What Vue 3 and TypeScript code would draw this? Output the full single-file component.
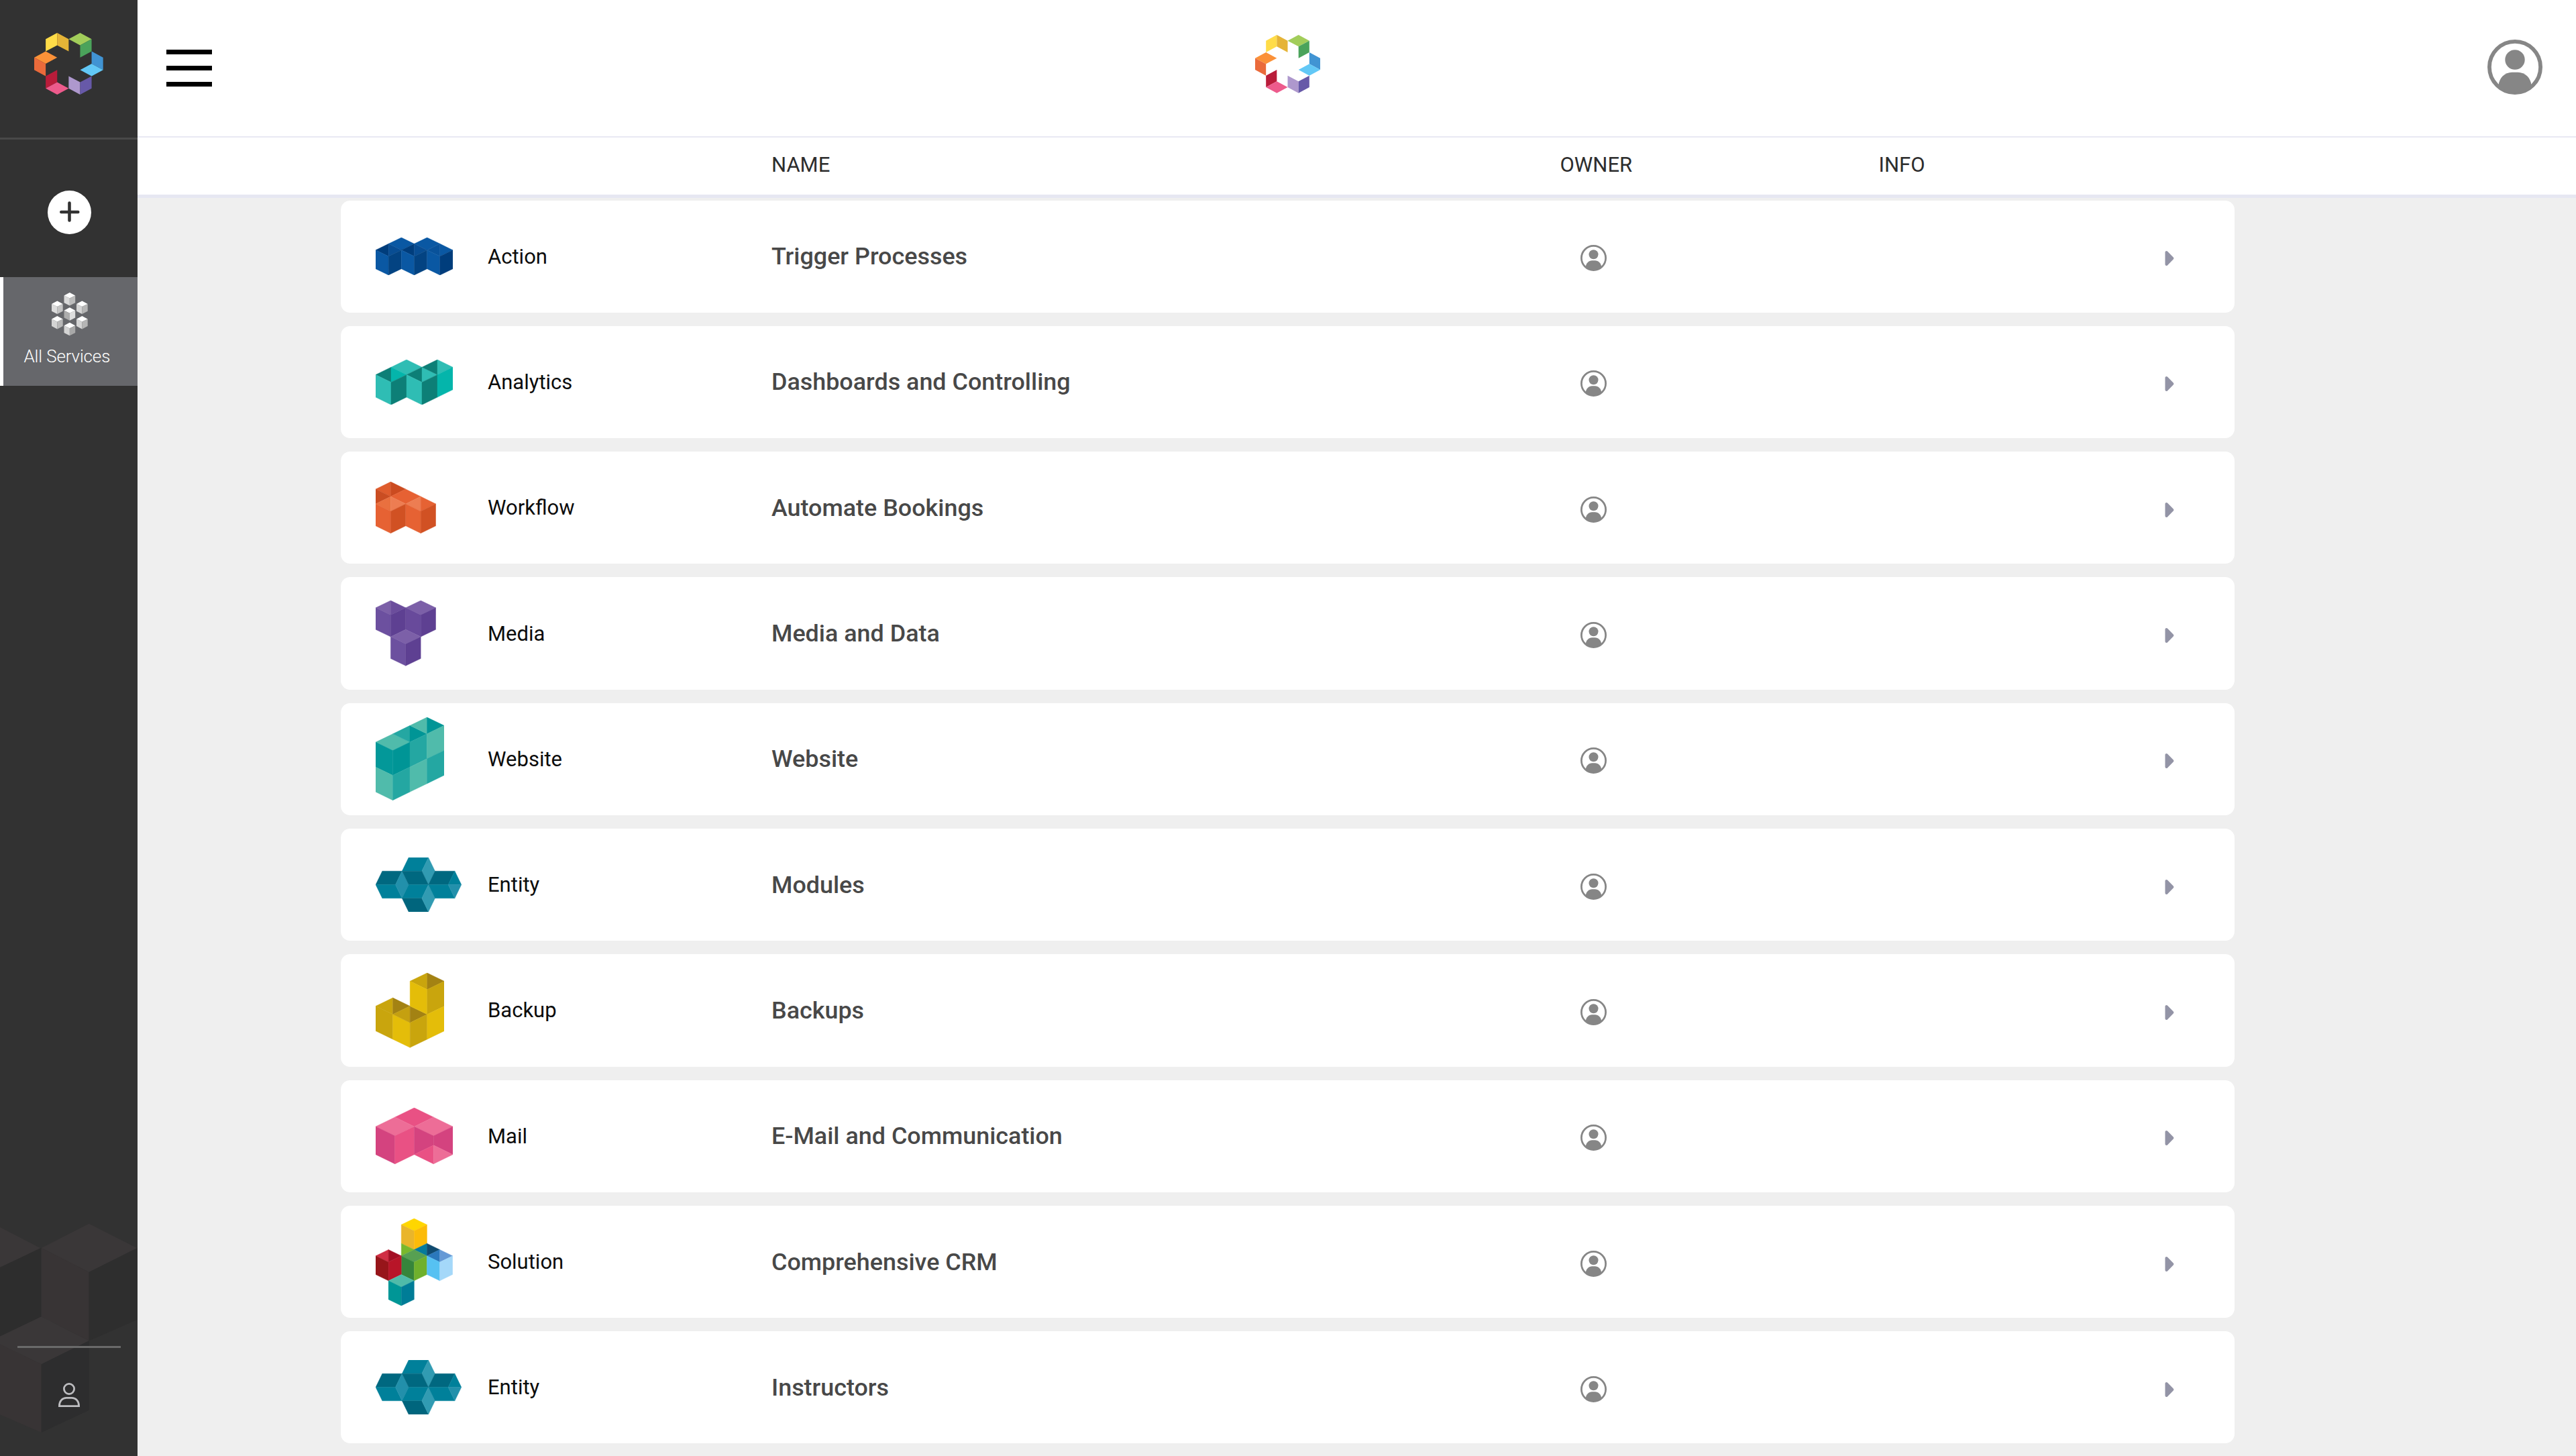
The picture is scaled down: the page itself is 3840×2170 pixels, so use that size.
<script setup lang="ts">
type Face = [points: string, fill: string]

interface Glyph {
  cols: number
  rows: number
  width: number
  height: number
  faces: Face[]
}

interface Service {
  kind: string
  icon: string
  title: string
}

// Faces are given on an isometric grid: cols x rows cells stretched to width x height.
const logoFaces: Face[] = [
  ['1,1 2,0 2,2 1,3', '#ffdc48'],
  ['2,0 3,1 3,3 2,2', '#e5b437'],
  ['3,1 4,0 5,1 4,2', '#a2cd5a'],
  ['4,2 5,1 5,3 4,4', '#4ba35b'],
  ['0,4 1,3 2,4 1,5', '#fb9138'],
  ['0,4 1,5 1,7 0,6', '#ea6a3b'],
  ['5,3 6,4 6,6 5,5', '#4194d3'],
  ['4,6 5,5 6,6 5,7', '#62c8f6'],
  ['3,7 4,8 4,10 3,9', '#ae98cd'],
  ['4,8 5,7 5,9 4,10', '#6759a8'],
  ['1,7 2,6 2,8 1,9', '#b91c3a'],
  ['1,9 2,8 3,9 2,10', '#ed5b8c'],
]

const glyphs: Record<string, Glyph> = {
  action: {
    cols: 6, rows: 6, width: 115, height: 56,
    faces: [
      ['1,1 2,0 3,1 2,2', '#0a58a3'],
      ['3,1 4,0 5,1 4,2', '#0a58a3'],
      ['0,2 1,1 1,3', '#003d7c'],
      ['1,1 2,2 1,3', '#084d93'],
      ['0,2 1,3 1,6 0,5', '#0a58a3'],
      ['1,3 2,2 2,5 1,6', '#034382'],
      ['2,2 3,1 3,3', '#003d7c'],
      ['3,1 4,2 3,3', '#084d93'],
      ['2,2 3,3 3,6 2,5', '#0a58a3'],
      ['3,3 4,2 4,5 3,6', '#034382'],
      ['4,2 5,1 5,3', '#09529a'],
      ['5,1 6,2 5,3', '#0a58a3'],
      ['4,2 5,3 5,6 4,5', '#0a58a3'],
      ['5,3 6,2 6,5 5,6', '#003d7c'],
    ],
  },
  analytics: {
    cols: 5, rows: 6, width: 115, height: 67.3,
    faces: [
      ['1,1 2,0 3,1 2,2', '#2fbdb4'],
      ['0,2 1,1 1,3', '#0d7f77'],
      ['1,1 2,2 1,3', '#04b5ab'],
      ['0,2 1,3 1,6 0,5', '#2fbdb4'],
      ['1,3 2,2 2,5 1,6', '#0d7f77'],
      ['2,2 3,1 3,3', '#0d7f77'],
      ['3,1 4,2 3,3', '#2fbdb4'],
      ['2,2 3,3 3,6 2,5', '#2fbdb4'],
      ['3,3 4,2 4,5 3,6', '#0d7f77'],
      ['3,1 4,0 4,2', '#0d7f77'],
      ['4,0 5,1 4,2', '#2fbdb4'],
      ['4,2 5,1 5,4 4,5', '#04b5ab'],
    ],
  },
  workflow: {
    cols: 4, rows: 7, width: 89.6, height: 76.8,
    faces: [
      ['0,1 1,0 1,2', '#df5c2d'],
      ['1,0 2,1 1,2', '#cb4b20'],
      ['0,1 1,2 0,3', '#ca4d22'],
      ['1,2 2,1 3,2 2,3', '#e66133'],
      ['0,3 1,2 1,4', '#e9703f'],
      ['1,2 2,3 1,4', '#ed7d52'],
      ['0,3 1,4 1,7 0,6', '#e66233'],
      ['1,4 2,3 2,6 1,7', '#d15123'],
      ['2,3 3,2 3,4', '#ed7d52'],
      ['3,2 4,3 3,4', '#e66233'],
      ['2,3 3,4 3,7 2,6', '#e66233'],
      ['3,4 4,3 4,6 3,7', '#d15123'],
    ],
  },
  media: {
    cols: 4, rows: 9, width: 89.6, height: 97.3,
    faces: [
      ['0,1 1,0 1,2', '#7c60a8'],
      ['1,0 2,1 1,2', '#6b4d9c'],
      ['0,1 1,2 1,5 0,4', '#6c509f'],
      ['1,2 2,1 2,4 1,5', '#5e4092'],
      ['2,1 3,0 4,1 3,2', '#7c60a8'],
      ['2,1 3,2 3,5 2,4', '#684a9b'],
      ['3,2 4,1 4,4 3,5', '#5e4092'],
      ['1,5 2,4 3,5 2,6', '#7c60a8'],
      ['1,5 2,6 2,9 1,8', '#6c509f'],
      ['2,6 3,5 3,8 2,9', '#5e4092'],
    ],
  },
  website: {
    cols: 4, rows: 10, width: 102, height: 123.7,
    faces: [
      ['0,3 1,2 2,3 1,4', '#50bbab'],
      ['1,2 2,1 2,3', '#24a7a2'],
      ['2,1 3,2 2,3', '#009596'],
      ['2,1 3,0 3,2', '#50bbab'],
      ['3,0 4,1 3,2', '#009596'],
      ['0,3 1,4 1,7 0,6', '#039899'],
      ['0,6 1,7 1,10 0,9', '#50bbab'],
      ['1,4 2,3 2,6 1,7', '#009596'],
      ['1,7 2,6 2,9 1,10', '#24a7a2'],
      ['2,3 3,2 3,5 2,6', '#24a7a2'],
      ['2,6 3,5 3,8 2,9', '#50bbab'],
      ['3,2 4,1 4,4 3,5', '#50bbab'],
      ['3,5 4,4 4,7 3,8', '#24a7a2'],
    ],
  },
  entity: {
    cols: 13, rows: 4, width: 127.8, height: 81,
    faces: [
      ['0,2 1,1 4,1 3,2', '#006880'],
      ['0,2 3,2 4,3 1,3', '#00809a'],
      ['3,2 4,1 5,2 4,3', '#2290ab'],
      ['4,1 5,0 8,0 7,1', '#00809a'],
      ['8,0 9,1 8,2 7,1', '#319bb2'],
      ['4,1 7,1 8,2 5,2', '#006880'],
      ['5,2 8,2 7,3 4,3', '#00809a'],
      ['4,3 7,3 8,4 5,4', '#00657d'],
      ['7,3 8,2 9,3 8,4', '#319bb2'],
      ['8,2 9,1 12,1 11,2', '#006880'],
      ['8,2 11,2 12,3 9,3', '#00809a'],
      ['11,2 12,1 13,2', '#00809a'],
      ['11,2 13,2 12,3', '#2290ab'],
    ],
  },
  backup: {
    cols: 4, rows: 9, width: 102.4, height: 111.3,
    faces: [
      ['0,4 1,3 1,5', '#c9a50d'],
      ['1,3 2,4 1,5', '#a38213'],
      ['0,4 1,5 1,8 0,7', '#c9a50d'],
      ['1,5 2,6 2,9 1,8', '#e4bd09'],
      ['1,5 2,4 2,6', '#c5a010'],
      ['2,4 3,5 2,6', '#a38213'],
      ['2,1 3,0 3,2', '#c9a50d'],
      ['3,0 4,1 3,2', '#a38213'],
      ['2,1 3,2 3,5 2,4', '#e4bd09'],
      ['3,2 4,1 4,4 3,5', '#c9a50d'],
      ['2,6 3,5 3,8 2,9', '#c9a50d'],
      ['3,5 4,4 4,7 3,8', '#e4bd09'],
    ],
  },
  mail: {
    cols: 4, rows: 6, width: 115, height: 83.7,
    faces: [
      ['1,1 2,0 3,1 2,2', '#e95184'],
      ['0,2 1,1 2,2 1,3', '#ed6d97'],
      ['0,2 1,3 1,6 0,5', '#d4437f'],
      ['1,3 2,2 2,5 1,6', '#e95184'],
      ['2,2 3,1 4,2 3,3', '#ed6d97'],
      ['2,2 3,3 3,4 2,5', '#d4437f'],
      ['3,3 4,2 4,5 3,4', '#d4437f'],
      ['2,5 3,4 3,6', '#e95184'],
      ['3,4 4,5 3,6', '#ed6d97'],
    ],
  },
  solution: {
    cols: 6, rows: 14, width: 114.7, height: 130,
    faces: [
      ['2,1 3,0 4,1 3,2', '#ffd600'],
      ['2,1 3,2 3,5 2,4', '#e9b52b'],
      ['3,2 4,1 4,4 3,5', '#fcbb09'],
      ['2,4 3,5 2,6', '#7ab82c'],
      ['3,5 4,4 4,6', '#067a9b'],
      ['4,4 5,5 4,6', '#104b70'],
      ['2,6 3,5 4,6 3,7', '#57a052'],
      ['2,6 3,7 3,10 2,9', '#36853b'],
      ['3,7 4,6 4,9 3,10', '#6fb02c'],
      ['4,6 5,5 5,7', '#2b78bb'],
      ['5,5 6,6 5,7', '#6499d6'],
      ['4,6 5,7 5,10 4,9', '#56c1f2'],
      ['5,7 6,6 6,9 5,10', '#a4d8f9'],
      ['0,6 1,5 1,7', '#d02e44'],
      ['1,5 2,6 1,7', '#a40f24'],
      ['0,6 1,7 1,10 0,9', '#97151a'],
      ['1,7 2,6 2,9 1,10', '#b81528'],
      ['1,10 2,9 3,10 2,11', '#50bba9'],
      ['1,10 2,11 2,14 1,13', '#009696'],
      ['2,11 3,10 3,13 2,14', '#007d97'],
    ],
  },
}

const services: Service[] = [
  { kind: 'Action', icon: 'action', title: 'Trigger Processes' },
  { kind: 'Analytics', icon: 'analytics', title: 'Dashboards and Controlling' },
  { kind: 'Workflow', icon: 'workflow', title: 'Automate Bookings' },
  { kind: 'Media', icon: 'media', title: 'Media and Data' },
  { kind: 'Website', icon: 'website', title: 'Website' },
  { kind: 'Entity', icon: 'entity', title: 'Modules' },
  { kind: 'Backup', icon: 'backup', title: 'Backups' },
  { kind: 'Mail', icon: 'mail', title: 'E-Mail and Communication' },
  { kind: 'Solution', icon: 'solution', title: 'Comprehensive CRM' },
  { kind: 'Entity', icon: 'entity', title: 'Instructors' },
]

const clusterCubes: { x: number; y: number; left: string; right: string }[] = [
  { x: 18.5, y: 0, left: '#d9d9d9', right: '#bcbcbc' },
  { x: 0, y: 12.6, left: '#dcdcdc', right: '#c4c4c4' },
  { x: 37, y: 12.6, left: '#d4d4d4', right: '#b5b5b5' },
  { x: 18.5, y: 22.3, left: '#adadad', right: '#dedede' },
  { x: 0, y: 34.9, left: '#d4d4d4', right: '#b8b8b8' },
  { x: 37, y: 34.9, left: '#d4d4d4', right: '#b5b5b5' },
  { x: 18.5, y: 44.8, left: '#d4d4d4', right: '#a8a8a8' },
]
</script>

<template>
  <div class="app">
    <aside class="sidebar">
      <div class="brand">
        <svg class="brand-logo" viewBox="0 0 6 10" preserveAspectRatio="none">
          <polygon v-for="(f, i) in logoFaces" :key="i" :points="f[0]" :fill="f[1]" />
        </svg>
      </div>
      <div class="create">
        <button class="plus" aria-label="Add">
          <svg viewBox="0 0 65 65">
            <path d="M32.500 18.500v26M20.300 32h25" stroke="#323232" stroke-width="4.600" stroke-linecap="round" />
          </svg>
        </button>
      </div>
      <div class="nav-item">
        <svg class="cluster" viewBox="0 0 54 65">
          <g v-for="(c, i) in clusterCubes" :key="i" :transform="`translate(${c.x} ${c.y})`">
            <path d="M0 4.500 8.350 0 16.700 4.500 8.350 8.500z" fill="#fff" />
            <path d="M0 4.500 8.350 8.500V19.500L0 15.200z" :fill="c.left" />
            <path d="M16.700 4.500 8.350 8.500V19.500L16.700 15.200z" :fill="c.right" />
          </g>
        </svg>
        <span>All Services</span>
      </div>
      <div class="sidebar-foot">
        <svg class="backdrop" viewBox="0 0 615 1170">
          <path d="M0 147 180 240 0 330z" fill="#3a3738" />
          <path d="M0 326 184 240V547L0 635z" fill="#2d2d2d" />
          <path d="M398 131 612 240 398 348 185 240z" fill="#3a3738" />
          <path d="M185 240 398 348V655L185 547z" fill="#383435" />
          <path d="M398 348 615 240V560L398 655z" fill="#2e2e2e" />
          <path d="M0 635 185 547 398 655 185 760 0 672z" fill="#3a3738" />
          <path d="M0 670 185 760V1065L0 985z" fill="#383435" />
          <path d="M185 760 398 655V965L185 1065z" fill="#2d2d2e" />
        </svg>
        <div class="foot-body">
          <hr />
          <svg class="person" viewBox="0 0 32 36">
            <g fill="none" stroke="#bdbdc0" stroke-width="2.800">
              <circle cx="16" cy="9" r="7.600" />
              <path d="M1.400 34.600C1.400 27 6 22.400 12 22.400h8c6 0 10.600 4.600 10.600 12.200z" />
            </g>
          </svg>
        </div>
      </div>
    </aside>

    <main class="main">
      <header class="topbar">
        <button class="menu" aria-label="Menu"><i /><i /><i /></button>
        <svg class="top-logo" viewBox="0 0 6 10" preserveAspectRatio="none">
          <polygon v-for="(f, i) in logoFaces" :key="i" :points="f[0]" :fill="f[1]" />
        </svg>
        <svg class="avatar" viewBox="0 0 82 82">
          <circle cx="41" cy="41" r="38.100" fill="none" stroke="#868686" stroke-width="5.800" />
          <circle cx="41" cy="30" r="14.700" fill="#868686" />
          <path d="M16.500 68C17.500 57 26 48.700 36.500 48.700h9C56 48.700 64.500 57 65.500 68 59 75 50 79 41 79S23 75 16.500 68z" fill="#868686" />
        </svg>
      </header>

      <div class="columns">
        <span>NAME</span>
        <span>OWNER</span>
        <span>INFO</span>
      </div>

      <section class="list">
        <article v-for="(s, i) in services" :key="i" class="card">
          <svg
            class="glyph"
            :style="{ width: glyphs[s.icon].width + 'px', height: glyphs[s.icon].height + 'px' }"
            :viewBox="`0 0 ${glyphs[s.icon].cols} ${glyphs[s.icon].rows}`"
            preserveAspectRatio="none"
          >
            <polygon
              v-for="(f, j) in glyphs[s.icon].faces"
              :key="j"
              :points="f[0]"
              :fill="f[1]"
              :stroke="f[1]"
            />
          </svg>
          <span class="kind">{{ s.kind }}</span>
          <h3 class="title">{{ s.title }}</h3>
          <svg class="owner" viewBox="0 0 82 82">
            <circle cx="41" cy="41" r="38.100" fill="none" stroke="#868686" stroke-width="5.800" />
            <circle cx="41" cy="30" r="14.700" fill="#868686" />
            <path d="M16.500 68C17.500 57 26 48.700 36.500 48.700h9C56 48.700 64.500 57 65.500 68 59 75 50 79 41 79S23 75 16.500 68z" fill="#868686" />
          </svg>
          <svg class="arrow" viewBox="0 0 14 24">
            <path d="M2.500 3v18L11.300 12z" fill="#9394a6" stroke="#9394a6" stroke-width="4" stroke-linejoin="round" />
          </svg>
        </article>
      </section>
    </main>
  </div>
</template>

<style>
html,
body {
  margin: 0;
  overflow: hidden;
}
</style>

<style scoped>
.app {
  display: flex;
  width: 3840px;
  height: 2170px;
  overflow: hidden;
  background: #efefef;
  font-family: Roboto, sans-serif;
}

svg {
  display: block;
}

button {
  padding: 0;
  border: 0;
  background: none;
}

.sidebar {
  display: flex;
  flex-direction: column;
  flex: none;
  width: 205px;
  background: #323232;
}

.brand {
  box-sizing: border-box;
  height: 208px;
  padding: 48.5px 0 0 51px;
  border-bottom: 3px solid #494949;
}

.brand-logo {
  width: 102.7px;
  height: 92px;
}

.create {
  display: flex;
  justify-content: center;
  height: 204.5px;
  padding: 76px 0 0 1px;
  box-sizing: border-box;
}

.plus {
  width: 65px;
  height: 65px;
  border-radius: 50%;
  background: #fff;
}

.nav-item {
  box-sizing: border-box;
  display: flex;
  flex-direction: column;
  height: 162px;
  padding-top: 23px;
  border-left: 5px solid #fff;
  background: #66676b;
  color: #fff;
  font-size: 26px;
  font-weight: 300;
  letter-spacing: -0.15px;
}

.nav-item span {
  margin: 14px 0 0 30.5px;
  line-height: 32px;
}

.cluster {
  width: 54px;
  height: 65px;
  margin-left: 71.5px;
}

.sidebar-foot {
  position: relative;
  height: 390px;
  margin-top: auto;
}

.backdrop {
  position: absolute;
  inset: 0;
  width: 205px;
  height: 390px;
}

.foot-body {
  position: relative;
  padding: 226px 25px 0 26px;
}

.foot-body hr {
  height: 3px;
  margin: 0;
  border: 0;
  background: #6a6a6a;
}

.person {
  width: 32px;
  height: 36px;
  margin: 52px 0 0 61px;
}

.main {
  display: flex;
  flex-direction: column;
  flex: 1;
  min-width: 0;
}

.topbar {
  box-sizing: border-box;
  display: flex;
  flex: none;
  align-items: flex-start;
  justify-content: space-between;
  height: 205px;
  padding: 0 50px 0 43.3px;
  border-bottom: 2px solid #e8e8f3;
  background: #fff;
}

.menu {
  display: flex;
  flex-direction: column;
  gap: 17px;
  width: 67.7px;
  margin-top: 73.5px;
}

.menu i {
  height: 7px;
  background: #000;
}

.top-logo {
  width: 97px;
  height: 86.7px;
  margin: 52.3px 0 0 -185.6px;
}

.avatar {
  width: 82px;
  height: 82px;
  margin-top: 59px;
}

.columns {
  box-sizing: border-box;
  display: grid;
  flex: none;
  grid-template-columns: 1175.5px 475px auto;
  align-items: start;
  height: 90px;
  padding: 22px 0 0 945px;
  border-bottom: 5px solid #e6e7f2;
  background: #fff;
  color: #2d2d2d;
  font-size: 31px;
  line-height: 37px;
}

.list {
  display: flex;
  flex-direction: column;
  gap: 20.05px;
  padding: 3.5px 0 0 303px;
}

.card {
  display: grid;
  grid-template-columns: 167px 423px 1205.5px 871.5px auto;
  align-items: center;
  box-sizing: border-box;
  width: 2823px;
  height: 167.25px;
  padding-left: 52px;
  border-radius: 14px;
  background: #fff;
}

.glyph polygon {
  stroke-width: 0.4px;
  vector-effect: non-scaling-stroke;
}

.kind {
  color: #0c0c0c;
  font-size: 31px;
}

.title {
  margin: 0;
  color: #484848;
  font-size: 35.9px;
  font-weight: 500;
}

.owner {
  width: 39px;
  height: 39px;
  margin-top: 5px;
}

.arrow {
  width: 14px;
  height: 24px;
  margin-top: 6px;
}
</style>
